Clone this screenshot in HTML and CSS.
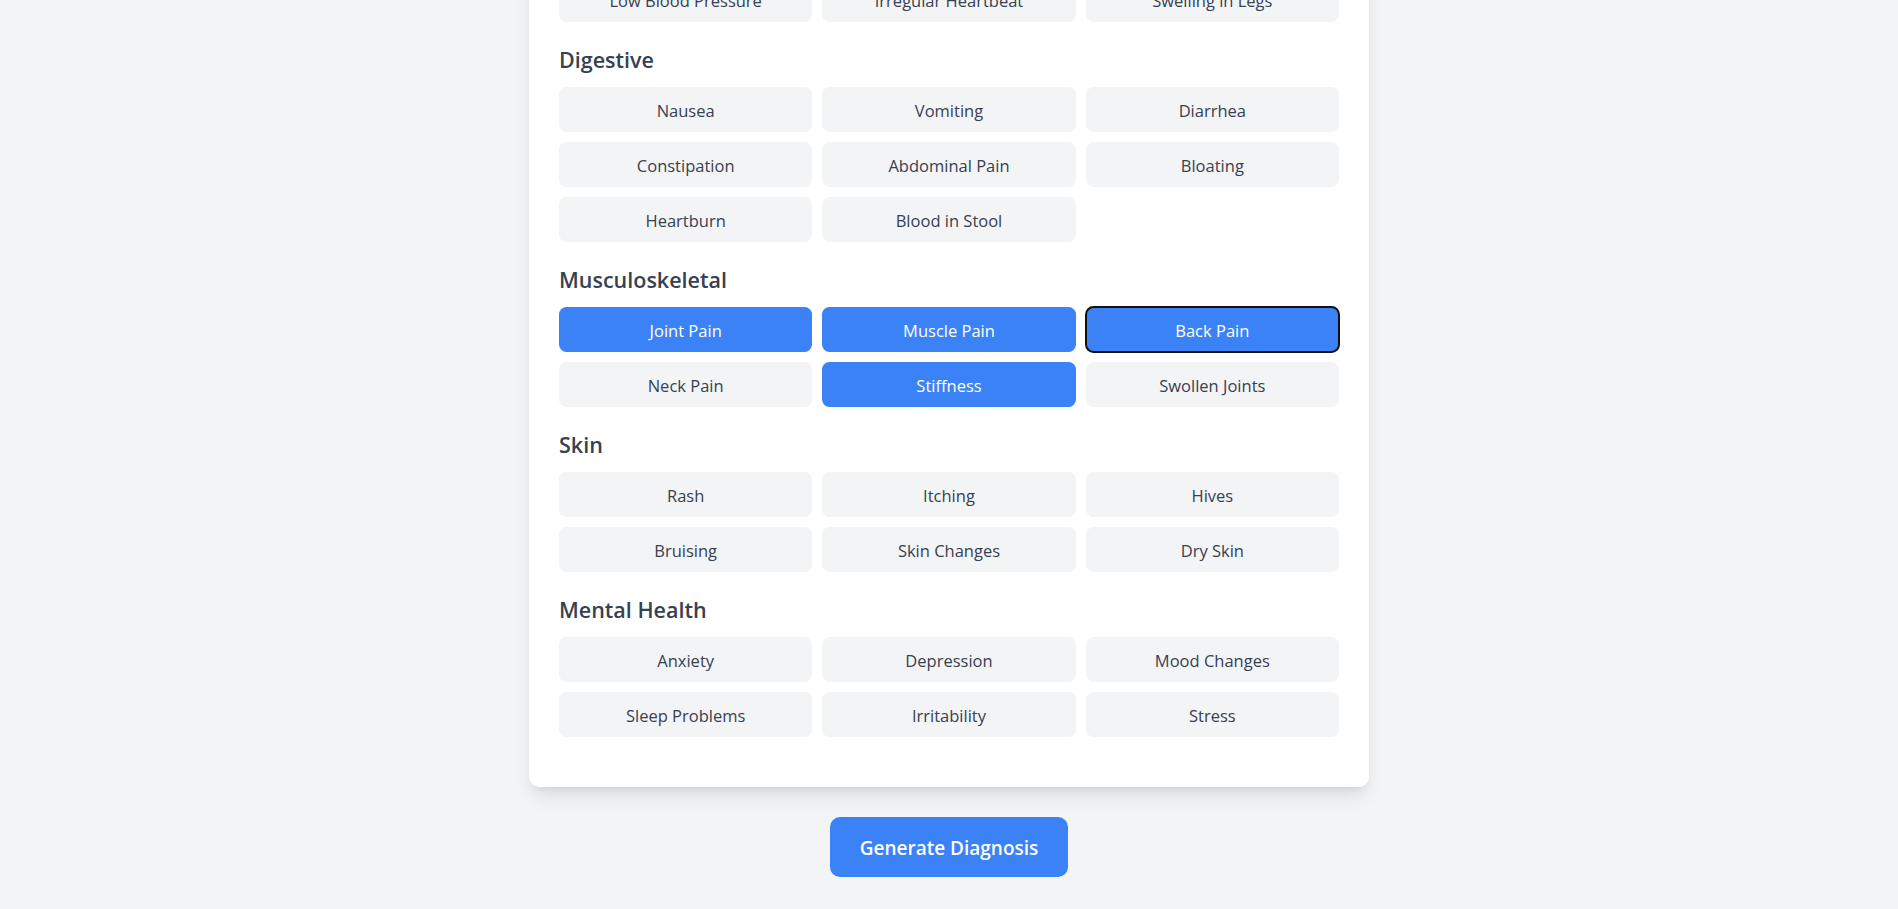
FILE: index.html
```html
<!DOCTYPE html>
<html lang="en">
<head>
<meta charset="utf-8">
<title>Symptom Checker</title>
<link rel="stylesheet" href="styles.css">
</head>
<body>
<main class="page">
  <div class="card">
    <section class="group">
      <div class="grid">
        <button class="chip">Low Blood Pressure</button>
        <button class="chip">Irregular Heartbeat</button>
        <button class="chip">Swelling in Legs</button>
      </div>
    </section>
    <section class="group">
      <h3 class="group-title">Digestive</h3>
      <div class="grid">
        <button class="chip">Nausea</button>
        <button class="chip">Vomiting</button>
        <button class="chip">Diarrhea</button>
        <button class="chip">Constipation</button>
        <button class="chip">Abdominal Pain</button>
        <button class="chip">Bloating</button>
        <button class="chip">Heartburn</button>
        <button class="chip">Blood in Stool</button>
      </div>
    </section>
    <section class="group">
      <h3 class="group-title">Musculoskeletal</h3>
      <div class="grid">
        <button class="chip selected">Joint Pain</button>
        <button class="chip selected">Muscle Pain</button>
        <button class="chip selected focused">Back Pain</button>
        <button class="chip">Neck Pain</button>
        <button class="chip selected">Stiffness</button>
        <button class="chip">Swollen Joints</button>
      </div>
    </section>
    <section class="group">
      <h3 class="group-title">Skin</h3>
      <div class="grid">
        <button class="chip">Rash</button>
        <button class="chip">Itching</button>
        <button class="chip">Hives</button>
        <button class="chip">Bruising</button>
        <button class="chip">Skin Changes</button>
        <button class="chip">Dry Skin</button>
      </div>
    </section>
    <section class="group">
      <h3 class="group-title">Mental Health</h3>
      <div class="grid">
        <button class="chip">Anxiety</button>
        <button class="chip">Depression</button>
        <button class="chip">Mood Changes</button>
        <button class="chip">Sleep Problems</button>
        <button class="chip">Irritability</button>
        <button class="chip">Stress</button>
      </div>
    </section>
  </div>
  <div class="actions">
    <button class="primary">Generate Diagnosis</button>
  </div>
</main>
</body>
</html>
```

FILE: styles.css
```css
html, body {
  margin: 0;
  padding: 0;
  background: #f3f4f6;
  font-family: "Open Sans", "Noto Sans", sans-serif;
  color: #374151;
}

.page {
  width: 840px;
  margin: -53px auto 0;
  padding-bottom: 40px;
}

.card {
  background: #ffffff;
  border-radius: 10px;
  padding: 30px;
  box-shadow: 0 12px 19px -4px rgba(0, 0, 0, 0.1), 0 5px 8px -5px rgba(0, 0, 0, 0.1);
}

.group {
  margin-bottom: 20px;
}

.group-title {
  margin: 0 0 10px;
  font-size: 21.5px;
  line-height: 35px;
  font-weight: 600;
  color: #374151;
}

.grid {
  display: grid;
  grid-template-columns: repeat(3, 1fr);
  gap: 10px;
}

.chip {
  font-family: inherit;
  font-size: 16.5px;
  line-height: 25px;
  padding: 11px 15px 9px;
  border: 0;
  border-radius: 7.5px;
  background: #f3f4f6;
  color: #374151;
  text-align: center;
}

.chip.selected {
  background: #3b82f6;
  color: #ffffff;
}

.chip.focused {
  outline: 2px solid #111111;
  outline-offset: -1px;
}

.actions {
  display: flex;
  justify-content: center;
  margin-top: 30px;
}

.primary {
  font-family: inherit;
  font-size: 19px;
  line-height: 30px;
  font-weight: 600;
  padding: 16px 30px 14px;
  border: 0;
  border-radius: 10px;
  background: #3b82f6;
  color: #ffffff;
}
```
